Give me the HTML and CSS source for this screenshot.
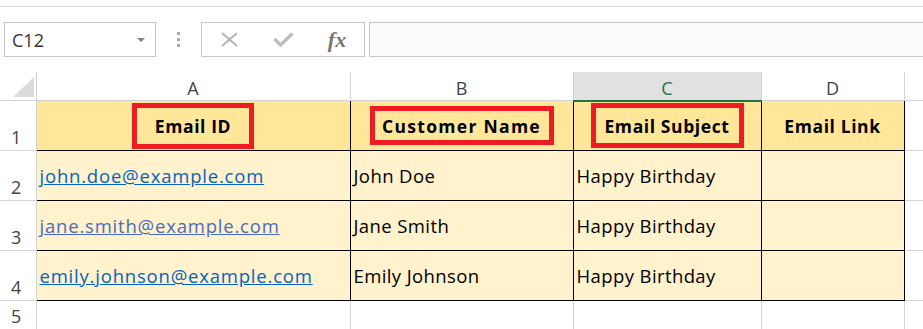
FILE: index.html
```html
<!DOCTYPE html>
<html lang="en">
<head>
  <meta charset="UTF-8">
  <title>Email list - Excel</title>
  <link rel="stylesheet" href="styles.css">
</head>
<body>
  <div class="ribbon-edge"></div>

  <div class="formula-bar">
    <div class="namebox">
      <span>C12</span>
      <span class="drop"></span>
    </div>
    <div class="grip">
      <i></i><i></i><i></i>
    </div>
    <div class="fx-buttons">
      <span class="fx-btn">
        <svg width="17" height="15" viewBox="0 0 17 15"><path d="M1 1 L16 14 M16 1 L1 14" stroke="#b4b4b4" stroke-width="2" fill="none"/></svg>
      </span>
      <span class="fx-btn">
        <svg width="21" height="15" viewBox="0 0 21 15"><path d="M1.5 7 L7.5 13 L19.5 1.5" stroke="#bdbdbd" stroke-width="3.4" fill="none"/></svg>
      </span>
      <span class="fx-btn fx-label">fx</span>
    </div>
    <div class="formula-input"></div>
  </div>

  <table class="sheet">
    <colgroup>
      <col class="col-rh">
      <col class="col-a">
      <col class="col-b">
      <col class="col-c">
      <col class="col-d">
      <col class="col-e">
    </colgroup>
    <thead>
      <tr>
        <th class="corner"><span class="tri"></span></th>
        <th>A</th>
        <th>B</th>
        <th class="selected">C</th>
        <th>D</th>
        <th></th>
      </tr>
    </thead>
    <tbody>
      <tr class="head-row">
        <th class="rownum">1</th>
        <td class="cell-head"><span class="mark mark-id">Email ID</span></td>
        <td class="cell-head"><span class="mark mark-name">Customer Name</span></td>
        <td class="cell-head"><span class="mark mark-subject">Email Subject</span></td>
        <td class="cell-head">Email Link</td>
        <td></td>
      </tr>
      <tr>
        <th class="rownum">2</th>
        <td class="cell"><a href="#" class="link">john.doe@example.com</a></td>
        <td class="cell">John Doe</td>
        <td class="cell">Happy Birthday</td>
        <td class="cell"></td>
        <td></td>
      </tr>
      <tr>
        <th class="rownum">3</th>
        <td class="cell"><a href="#" class="link visited">jane.smith@example.com</a></td>
        <td class="cell">Jane Smith</td>
        <td class="cell">Happy Birthday</td>
        <td class="cell"></td>
        <td></td>
      </tr>
      <tr>
        <th class="rownum">4</th>
        <td class="cell"><a href="#" class="link">emily.johnson@example.com</a></td>
        <td class="cell">Emily Johnson</td>
        <td class="cell">Happy Birthday</td>
        <td class="cell"></td>
        <td></td>
      </tr>
      <tr class="last-row">
        <th class="rownum">5</th>
        <td></td>
        <td></td>
        <td></td>
        <td></td>
        <td></td>
      </tr>
    </tbody>
  </table>
</body>
</html>
```

FILE: styles.css
```css
/* General */
body {
  margin: 0;
  font-family: 'Open Sans', sans-serif;
  background-color: #fff;
  color: #000;
  overflow: hidden;
}

/* Ribbon edge at the top */
.ribbon-edge {
  height: 6px;
  border-bottom: 1px solid #d4d4d4;
}

/* Formula bar */
.formula-bar {
  display: flex;
  height: 35px;
  margin-top: 15px;
}
.namebox {
  box-sizing: border-box;
  width: 152px;
  margin-left: 4px;
  border: 1px solid #c6c6c6;
  display: flex;
  align-items: center;
  justify-content: space-between;
  padding: 0 10px 0 7px;
  font-size: 18px;
  color: #333;
}
.drop {
  width: 0;
  height: 0;
  border-left: 4px solid transparent;
  border-right: 4px solid transparent;
  border-top: 4px solid #808080;
}
.grip {
  width: 45px;
  display: flex;
  flex-direction: column;
  align-items: center;
  justify-content: center;
  gap: 3px;
}
.grip i {
  display: block;
  width: 3px;
  height: 3px;
  background-color: #ababab;
}
.fx-buttons {
  box-sizing: border-box;
  width: 164px;
  border: 1px solid #c6c6c6;
  display: flex;
  align-items: center;
}
.fx-btn {
  width: 54px;
  display: flex;
  justify-content: center;
  align-items: center;
}
.fx-label {
  font-family: 'Liberation Serif', serif;
  font-style: italic;
  font-weight: bold;
  font-size: 22px;
  color: #767676;
  line-height: 1;
}
.formula-input {
  flex: 1;
  margin-left: 4px;
  border: 1px solid #c6c6c6;
  border-right: none;
  background-color: #fbfbfb;
}

/* Sheet grid */
.sheet {
  margin-top: 15px;
  border-collapse: collapse;
  table-layout: fixed;
  width: 964px;
}
.col-rh { width: 36px; }
.col-a { width: 314px; }
.col-b { width: 223px; }
.col-c { width: 188px; }
.col-d { width: 143px; }
.col-e { width: 60px; }

.sheet th,
.sheet td {
  padding: 0;
  border: 1px solid #d4d4d4;
}
.sheet thead th {
  height: 25px;
  border-top: none;
  font-weight: normal;
  font-size: 18px;
  line-height: 20px;
  color: #444;
  vertical-align: bottom;
  padding-bottom: 2px;
  text-align: center;
}
.sheet thead th.corner {
  padding-bottom: 3px;
  border-left: none;
}
.tri {
  display: block;
  width: 0;
  height: 0;
  margin: 0 2px 0 auto;
  border-left: 21px solid transparent;
  border-bottom: 20px solid #dcdcdc;
}
.sheet thead th.selected {
  background-color: #e1e1e1;
  color: #217346;
  border-bottom: 2px solid #217346;
}

.sheet tbody tr {
  height: 50px;
}
.sheet tbody tr.last-row {
  height: 29px;
}
.rownum {
  font-weight: normal;
  font-size: 18px;
  line-height: 20px;
  color: #444;
  vertical-align: bottom;
  padding-bottom: 3px !important;
  padding-right: 3px !important;
  text-align: center;
  border-left: none !important;
}

.cell,
.cell-head {
  border: 1px solid #000 !important;
  font-size: 18.5px;
  letter-spacing: 0.4px;
  white-space: nowrap;
  overflow: hidden;
  vertical-align: middle;
}
.cell {
  background-color: #fff2cc;
  padding-left: 3px !important;
}
.cell-head {
  background-color: #ffe699;
  font-size: 17.5px;
  font-weight: bold;
  text-align: center;
  letter-spacing: 0.6px;
}
.head-row .cell-head {
  border-top-color: #d4d4d4 !important;
}

/* Red annotation boxes */
.mark {
  box-sizing: border-box;
  display: inline-flex;
  align-items: center;
  justify-content: center;
  vertical-align: middle;
  border: 5px solid #ed1c24;
}
.mark-id {
  width: 122px;
  height: 46px;
}
.mark-name {
  width: 184px;
  height: 39px;
  letter-spacing: 1.3px;
}
.mark-subject {
  width: 153px;
  height: 45px;
}

/* Hyperlinks */
.link {
  color: #0563c1;
  text-decoration: underline;
  letter-spacing: 0.8px;
}
.link.visited {
  color: #4a6cc0;
}
```
